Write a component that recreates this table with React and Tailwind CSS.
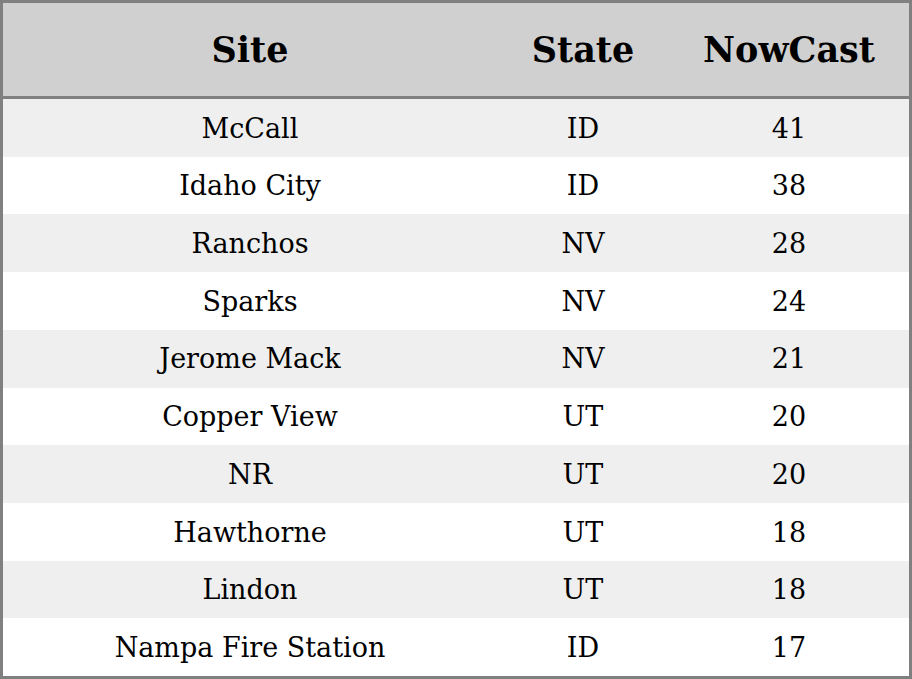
import React from "react";

const rows = [
  ["McCall", "ID", "41"],
  ["Idaho City", "ID", "38"],
  ["Ranchos", "NV", "28"],
  ["Sparks", "NV", "24"],
  ["Jerome Mack", "NV", "21"],
  ["Copper View", "UT", "20"],
  ["NR", "UT", "20"],
  ["Hawthorne", "UT", "18"],
  ["Lindon", "UT", "18"],
  ["Nampa Fire Station", "ID", "17"],
];

export default function App() {
  return (
    <div className="w-[912px] h-[679px] bg-white" style={{ fontFamily: '"DejaVu Serif", serif' }}>
      <div className="w-[912px] h-[679px] border-[3px] border-[#808080] flex flex-col text-black">
        <div className="h-[96px] shrink-0 flex items-center pt-[2px] bg-[#d0d0d0] border-b-[3px] border-[#808080] font-bold text-[35px]">
          <div className="w-[494px] text-center">Site</div>
          <div className="w-[172px] text-center">State</div>
          <div className="flex-1 text-center">NowCast</div>
        </div>
        {rows.map((r, i) => (
          <div
            key={i}
            className={`flex-1 flex items-center pt-[2px] text-[27px] ${i % 2 === 0 ? "bg-[#efefef]" : "bg-white"}`}
          >
            <div className="w-[494px] text-center">{r[0]}</div>
            <div className="w-[172px] text-center">{r[1]}</div>
            <div className="flex-1 text-center">{r[2]}</div>
          </div>
        ))}
      </div>
    </div>
  );
}
